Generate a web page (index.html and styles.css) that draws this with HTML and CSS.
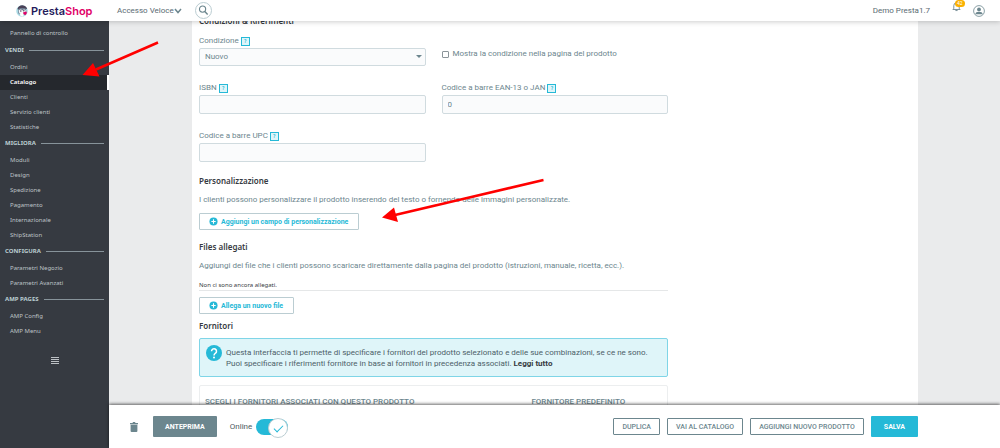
FILE: index.html
```html
<!DOCTYPE html>
<html lang="it">
<head>
<meta charset="utf-8">
<meta name="viewport" content="width=device-width, initial-scale=1">
<title>PrestaShop</title>
<link rel="stylesheet" href="styles.css">
</head>
<body>
<header class="topbar">
  <a class="logo" href="#">
    <svg class="logo-mark" viewBox="0 0 26 26" aria-hidden="true">
      <circle cx="13" cy="13" r="12.500" fill="#a9d9e3"/>
      <path d="M3 9C5 3 9 .5 14 .8c6 .4 9 4 10 8L17 8 8 10z" fill="#4a4157"/>
      <path d="M5 9c4-3 13-3 17 0v9c-3 5-13 5-17 0z" fill="#6e7c90"/>
      <path d="M6 12c2-3 6-3 8 0 2-3 5-3 7-1v6l-7 4-7-3z" fill="#f6f9fb"/>
      <circle cx="10.500" cy="13" r="1.400" fill="#2b2440"/>
      <circle cx="17" cy="12.500" r="1.400" fill="#2b2440"/>
      <path d="M15 16l7-2c3 2 1 6-2 8l-4-3z" fill="#df0067"/>
      <path d="M8 19l6-1 3 3-2 4-5-1z" fill="#fff"/>
    </svg>
    <span class="logo-text">Presta<span class="logo-shop">Shop</span></span>
  </a>
  <button class="quick" type="button">Accesso Veloce
    <svg class="quick-caret" viewBox="0 0 8 6" aria-hidden="true"><path d="M1 1l3 3.500L7 1" fill="none" stroke="#6c868e" stroke-width="1.500"/></svg>
  </button>
  <button class="search" type="button" aria-label="Cerca">
    <svg viewBox="0 0 16 16" aria-hidden="true"><circle cx="7" cy="6.500" r="3.300" fill="none" stroke="#6c868e" stroke-width="1.200"/><path d="M9.400 9l3 3.200" stroke="#6c868e" stroke-width="1.500"/></svg>
  </button>
  <span class="shop-name">Demo Presta1.7</span>
  <button class="bell" type="button" aria-label="Notifiche">
    <svg viewBox="0 0 10 12" aria-hidden="true"><path d="M1 9.300h8L8 8V5a3 3 0 0 0-6 0v3z" fill="none" stroke="#6c868e"/><path d="M3.800 10.500h2.400" stroke="#6c868e"/></svg>
    <span class="badge">42</span>
  </button>
  <button class="account" type="button" aria-label="Account">
    <svg viewBox="0 0 12 12" aria-hidden="true"><circle cx="6" cy="6" r="5.400" fill="#fff" stroke="#6c868e" stroke-width=".8"/><circle cx="6" cy="4.400" r="1.900" fill="#6c868e"/><path d="M2.300 9.200c0-3.300 7.400-3.300 7.400 0z" fill="#6c868e"/></svg>
  </button>
</header>

<nav class="sidebar">
  <a class="item home" href="#">Pannello di controllo</a>
  <h2 class="group">VENDI</h2>
  <a class="item" href="#">Ordini</a>
  <a class="item active" href="#">Catalogo</a>
  <a class="item" href="#">Clienti</a>
  <a class="item" href="#">Servizio clienti</a>
  <a class="item" href="#">Statistiche</a>
  <h2 class="group">MIGLIORA</h2>
  <a class="item" href="#">Moduli</a>
  <a class="item" href="#">Design</a>
  <a class="item" href="#">Spedizione</a>
  <a class="item" href="#">Pagamento</a>
  <a class="item" href="#">Internazionale</a>
  <a class="item" href="#">ShipStation</a>
  <h2 class="group">CONFIGURA</h2>
  <a class="item" href="#">Parametri Negozio</a>
  <a class="item" href="#">Parametri Avanzati</a>
  <h2 class="group">AMP PAGES</h2>
  <a class="item" href="#">AMP Config</a>
  <a class="item" href="#">AMP Menu</a>
  <button class="collapse" type="button" aria-label="Riduci menu">
    <svg viewBox="0 0 8 8" aria-hidden="true"><path d="M0 1.500h8M0 3.500h8M0 5.500h8M0 7.500h8" stroke="#bcc0c4"/></svg>
  </button>
</nav>

<main class="content">
  <form class="panel" id="product">
    <section class="fields">
      <h3 class="title wide">Condizioni &amp; Riferimenti</h3>
      <div class="field">
        <div class="label-row"><label for="cond">Condizione</label><button class="help" type="button">?</button></div>
        <span class="select-wrap"><select class="control select" id="cond"><option>Nuovo</option></select></span>
      </div>
      <label class="check"><input type="checkbox">Mostra la condizione nella pagina del prodotto</label>
      <div class="field">
        <div class="label-row"><label for="isbn">ISBN</label><button class="help" type="button">?</button></div>
        <input class="control" id="isbn" type="text">
      </div>
      <div class="field">
        <div class="label-row"><label for="ean">Codice a barre EAN-13 o JAN</label><button class="help" type="button">?</button></div>
        <input class="control" id="ean" type="text" value="0">
      </div>
      <div class="field">
        <div class="label-row"><label for="upc">Codice a barre UPC</label><button class="help" type="button">?</button></div>
        <input class="control" id="upc" type="text">
      </div>
    </section>

    <section class="block first">
      <h3 class="title">Personalizzazione</h3>
      <p class="text">I clienti possono personalizzare il prodotto inserendo del testo o fornendo delle immagini personalizzate.</p>
      <button class="add" type="button"><svg viewBox="0 0 10 10" aria-hidden="true"><circle cx="5" cy="5" r="4.500" fill="#25b9d7"/><path d="M5 2.600v4.800M2.600 5h4.800" stroke="#fff" stroke-width="1.200"/></svg>Aggiungi un campo di personalizzazione</button>
    </section>

    <section class="block">
      <h3 class="title">Files allegati</h3>
      <p class="text">Aggiungi dei file che i clienti possono scaricare direttamente dalla pagina del prodotto (istruzioni, manuale, ricetta, ecc.).</p>
      <p class="empty">Non ci sono ancora allegati.</p>
      <button class="add attach" type="button"><svg viewBox="0 0 10 10" aria-hidden="true"><circle cx="5" cy="5" r="4.500" fill="#25b9d7"/><path d="M5 2.600v4.800M2.600 5h4.800" stroke="#fff" stroke-width="1.200"/></svg>Allega un nuovo file</button>
    </section>

    <section class="block last">
      <h3 class="title">Fornitori</h3>
      <div class="alert">
        <svg class="alert-icon" viewBox="0 0 16 16" aria-hidden="true"><circle cx="8" cy="8" r="8" fill="#25b9d7"/><path d="M5.500 6.200a2.500 2.500 0 1 1 4 2C8.400 9 8 9.300 8 10.500" fill="none" stroke="#fff" stroke-width="1.500"/><circle cx="8" cy="12.500" r="1" fill="#fff"/></svg>
        <p>Questa interfaccia ti permette di specificare i fornitori del prodotto selezionato e delle sue combinazioni, se ce ne sono.<br>Puoi specificare i riferimenti fornitore in base ai fornitori in precedenza associati. <a href="#">Leggi tutto</a></p>
      </div>
      <div class="suppliers">
        <h4>SCEGLI I FORNITORI ASSOCIATI CON QUESTO PRODOTTO</h4>
        <h4>FORNITORE PREDEFINITO</h4>
      </div>
    </section>
  </form>
</main>

<footer class="actions">
  <button class="trash" type="button" aria-label="Elimina">
    <svg viewBox="0 0 8 10" aria-hidden="true"><path d="M0 1h2.500l.5-1h2l.5 1H8v1.200H0zM.6 2.800h6.800V9a1 1 0 0 1-1 1H1.600a1 1 0 0 1-1-1z" fill="#6c868e"/></svg>
  </button>
  <button class="preview" type="button">ANTEPRIMA</button>
  <label class="online">Online
    <input class="switch" type="checkbox" checked>
  </label>
  <div class="buttons">
    <button class="outline" type="button">DUPLICA</button>
    <button class="outline" type="button">VAI AL CATALOGO</button>
    <button class="outline" type="button">AGGIUNGI NUOVO PRODOTTO</button>
    <button class="save" type="submit" form="product">SALVA</button>
  </div>
</footer>

<svg class="arrows" viewBox="0 0 1000 448" aria-hidden="true">
  <g stroke="#f00" stroke-width="2.500" fill="#f00">
    <path d="M158 42.500L96 69.500M543.500 180L395 215"/>
    <path stroke="none" d="M82.500 75l10.500-12 6.500 13.500zM382 217.500l12-10 4 14.500z"/>
  </g>
</svg>
</body>
</html>
```
FILE: styles.css
```css
* { box-sizing: border-box; }

body {
  margin: 0;
  height: 100vh;
  display: grid;
  grid-template: 21px minmax(0, 1fr) 43px / 109px minmax(0, 1fr);
  overflow: hidden;
  background: #eaebec;
  color: #6c868e;
  font: 8px/10px Roboto, "Open Sans", sans-serif;
}

button {
  margin: 0;
  padding: 0;
  border: 0;
  background: none;
  color: inherit;
  font: inherit;
  cursor: pointer;
}

svg { display: block; }
h2, h3, h4, p { margin: 0; }
a { color: inherit; text-decoration: none; }

/* Top bar */
.topbar {
  grid-column: 1 / 3;
  z-index: 2;
  display: flex;
  align-items: center;
  padding: 0 15px 0 16px;
  background: #fff;
  box-shadow: 0 1px 5px rgba(0, 0, 0, .2);
}
.logo {
  display: flex;
  align-items: center;
  gap: 3px;
  width: 101px;
}
.logo-mark { width: 12px; height: 12px; }
.logo-text {
  color: #251b5b;
  font: 600 11px/16px Inter, "Open Sans", sans-serif;
}
.logo-shop { color: #df0067; }
.quick {
  display: flex;
  align-items: center;
  gap: 0;
  color: #5a6b72;
}
.quick-caret { width: 8px; height: 6px; }
.search {
  width: 17px;
  height: 17px;
  margin-left: 13px;
  border: 1px solid #bbcdd2;
  border-radius: 50%;
}
.shop-name { margin-left: auto; color: #5a6b72; }
.bell { position: relative; margin: 0 0 8px 22px; }
.bell svg { width: 9px; height: 11px; }
.badge {
  position: absolute;
  top: -1px;
  left: 3px;
  padding: 0 2px;
  border-radius: 4px;
  background: #fab000;
  color: #fff;
  font-size: 5px;
  line-height: 7px;
}
.account { margin-left: 12px; }
.account svg { width: 12px; height: 12px; }

/* Sidebar */
.sidebar {
  grid-row: 2 / 4;
  padding-top: 5px;
  background: #363a41;
  font-family: "Noto Sans", "Open Sans", sans-serif;
}
.item {
  display: block;
  padding-left: 10px;
  color: #bec3c6;
  font-size: 6px;
  line-height: 15px;
}
.item.home { margin-bottom: 1px; }
.item.active {
  border-right: 2px solid #fff;
  background: #25282d;
  color: #fff;
  font-weight: 600;
}
.group {
  display: flex;
  align-items: center;
  gap: 5px;
  padding: 1px 5px 3px;
  color: #bbcdd2;
  font-size: 6px;
  font-weight: 700;
  line-height: 14px;
}
.group::after {
  content: "";
  flex: 1;
  height: 1px;
  background: #87939a;
}
.collapse { display: block; margin: 17px auto 0; }
.collapse svg { width: 8px; height: 8px; }

/* Product panel */
.content { overflow: hidden; }
.panel {
  min-height: 100%;
  margin: -6px 82px 0 83px;
  padding: 0 250px 0 7px;
  background: #fff;
}
.title {
  color: #363a41;
  font: 600 8px/12px "Noto Sans", "Open Sans", sans-serif;
}
.fields {
  display: grid;
  grid-template-columns: 1fr 1fr;
  column-gap: 16px;
  row-gap: 17px;
}
.wide { grid-column: 1 / 3; margin-bottom: -8px; }
.field { display: flex; flex-direction: column; gap: 2px; }
.label-row {
  display: flex;
  align-items: center;
  gap: 2px;
}
.help {
  width: 9px;
  height: 9px;
  border: 1px solid #25b9d7;
  background: #dff5f9;
  color: #25b9d7;
  font-size: 5px;
  font-weight: 600;
  line-height: 7px;
}
.control {
  width: 100%;
  height: 19px;
  padding: 0 5px;
  border: 1px solid #d0dbdf;
  border-radius: 2px;
  background: #fafbfc;
  color: #6c868e;
  font: inherit;
}
.select-wrap { position: relative; display: block; }
.select-wrap::after {
  content: "";
  position: absolute;
  top: 7px;
  right: 4px;
  border: 3px solid transparent;
  border-top-color: #6c868e;
  border-bottom: 0;
}
.select { display: block; height: 18px; appearance: none; }
.check {
  display: flex;
  align-items: center;
  gap: 4px;
  padding-top: 6px;
}
.check input {
  appearance: none;
  width: 7px;
  height: 7px;
  margin: 0;
  border: 1px solid #8b9499;
  border-radius: 1px;
}
.block { padding-top: 11px; }
.block.first { padding-top: 13px; }
.block.last { padding-top: 6px; }
.text { padding-top: 8px; }
.add {
  display: flex;
  align-items: center;
  gap: 3px;
  height: 17px;
  margin-top: 8px;
  padding: 0 10px 0 9px;
  border: 1px solid #bbcdd2;
  border-radius: 1px;
  color: #25b9d7;
  font-size: 7px;
  font-weight: 700;
}
.add.attach { margin-top: 6px; }
.add svg { width: 9px; height: 9px; }
.empty {
  padding-top: 9px;
  border-bottom: 1px solid #e5e7e8;
  color: #363a41;
  font-family: "Noto Sans", "Open Sans", sans-serif;
  font-size: 6px;
}
.alert {
  display: flex;
  gap: 4px;
  margin-top: 6px;
  padding: 6px;
  border: 1px solid #7fd5e7;
  border-radius: 2px;
  background: #dff5f9;
  color: #4c6068;
}
.alert p { padding: 2px 0 1px; line-height: 11px; }
.alert a { color: #363a41; font-weight: 700; }
.alert-icon { flex: none; width: 16px; height: 16px; }
.suppliers {
  display: grid;
  grid-template-columns: 5fr 2fr;
  margin-top: 8px;
  padding: 11px 5px;
  border: 1px solid #eceeef;
  border-radius: 2px;
}
.suppliers h4 { font-size: 8px; font-weight: 500; }

/* Bottom action bar */
.actions {
  z-index: 1;
  display: flex;
  align-items: center;
  padding: 0 82px 0 21px;
  background: #fff;
  box-shadow: 0 -1px 3px rgba(0, 0, 0, .6);
}
.trash svg { width: 8px; height: 10px; }
.preview {
  height: 21px;
  margin-left: 15px;
  padding: 0 12px;
  border-radius: 1px;
  background: #6c868e;
  color: #fff;
  font-size: 7px;
  font-weight: 700;
}
.online {
  display: flex;
  align-items: center;
  gap: 4px;
  margin-left: 13px;
  color: #4c5a60;
}
.switch {
  appearance: none;
  position: relative;
  width: 32px;
  height: 16px;
  margin: 0;
  border-radius: 8px;
  background: #25b9d7;
}
.switch::before {
  content: "";
  position: absolute;
  top: -1px;
  right: 0;
  width: 18px;
  height: 18px;
  border: 1px solid #bbcdd2;
  border-radius: 50%;
  background: #fff;
}
.switch::after {
  content: "";
  position: absolute;
  top: 4px;
  right: 7px;
  width: 4px;
  height: 8px;
  border: solid #25b9d7;
  border-width: 0 1px 1px 0;
  transform: rotate(45deg);
}
.buttons {
  display: flex;
  align-items: center;
  gap: 7px;
  margin-left: auto;
}
.outline {
  height: 17px;
  padding: 0 8px;
  border: 1px solid #6c868e;
  border-radius: 1px;
  font-size: 7px;
  font-weight: 500;
}
.save {
  height: 21px;
  padding: 0 13px;
  border-radius: 1px;
  background: #25b9d7;
  color: #fff;
  font-size: 7px;
  font-weight: 700;
}

/* Annotation arrows drawn over the page */
.arrows {
  position: absolute;
  z-index: 3;
  inset: 0;
  width: 1000px;
  height: 448px;
  pointer-events: none;
}
```
